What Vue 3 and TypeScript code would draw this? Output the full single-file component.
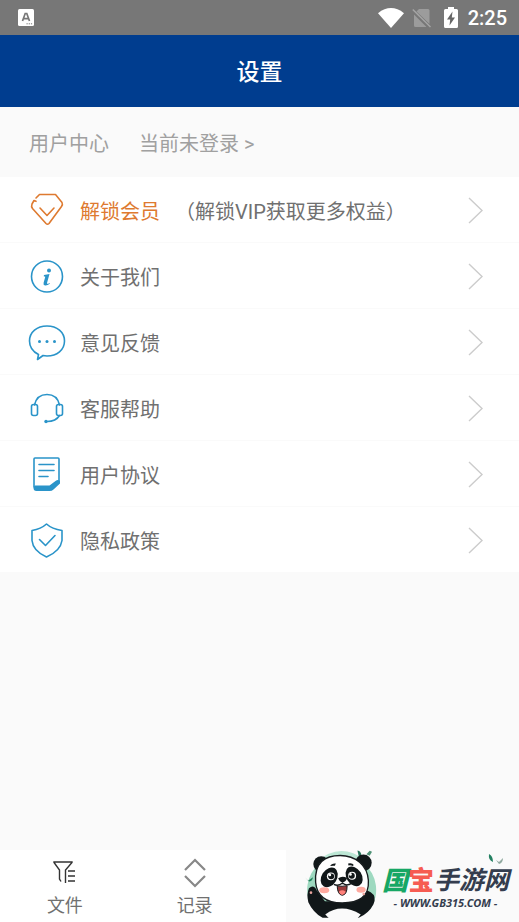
<script setup lang="ts">
interface MenuItem {
  id: string
  label: string
  note?: string
}

const items: MenuItem[] = [
  { id: 'vip', label: '解锁会员', note: '（解锁VIP获取更多权益）' },
  { id: 'about', label: '关于我们' },
  { id: 'feedback', label: '意见反馈' },
  { id: 'support', label: '客服帮助' },
  { id: 'terms', label: '用户协议' },
  { id: 'privacy', label: '隐私政策' },
]
</script>

<template>
  <div class="page">
    <div class="status">
      <svg class="status-app" viewBox="0 0 16 17" aria-hidden="true">
        <rect width="16" height="17" rx="1.5" fill="#fff" />
        <path d="M4.5 12 7.2 4.5h1.6L11.5 12M5.5 9.6h5" fill="none" stroke="#777" stroke-width="1.7" />
        <path d="M8.5 14.8h1.2m1 0h1.2m1 0h1.2" stroke="#777" stroke-width="1" />
      </svg>
      <div class="status-right">
        <svg class="wifi" viewBox="0 0 26 20" aria-hidden="true">
          <path d="M0 5.2Q13-5 26 5.2L13 20Z" fill="#fff" />
        </svg>
        <svg class="sim" viewBox="0 0 20 20" aria-hidden="true">
          <path d="M7 1h9q1.500 0 1.500 1.500V16L4.500 3.500ZM2 6.500 14.500 19H3.500Q2 19 2 17.500Z" fill="#9c9c9c" />
          <path d="M.8 1.500 18.500 19" stroke="#a5a5a5" stroke-width="1.500" />
        </svg>
        <svg class="battery" viewBox="0 0 14 21" aria-hidden="true">
          <path d="M4 0h6v2h2.500Q14 2 14 3.500v16q0 1.500-1.500 1.500h-11Q0 21 0 19.500v-16Q0 2 1.500 2H4Z" fill="#fff" />
          <path d="M8.500 4.500 3 12.500h3.200L5.500 18.500 11 10.500H7.800Z" fill="#666" />
        </svg>
        <span class="clock">2:25</span>
      </div>
    </div>

    <header class="header"><h1>设置</h1></header>

    <a class="account" href="#login">
      <span>用户中心</span>
      <span>当前未登录 &gt;</span>
    </a>

    <main class="menu">
      <a v-for="item in items" :key="item.id" class="row" :class="item.id" :href="'#' + item.id">
        <svg class="icon" viewBox="0 0 38 38" aria-hidden="true">
          <g v-if="item.id === 'vip'">
            <path d="M8 6 11.500 2.500h16L34 10.500q1 2-.5 4L21 31.500q-1.500 1.500-3 0L4.500 16.500Q3 14.500 4 12l2-3.500 2 .8" />
            <path d="m12 16 7 7.500 7-7.500" />
          </g>
          <g v-else-if="item.id === 'about'">
            <circle cx="19" cy="18.500" r="15.500" />
            <circle class="solid" cx="21" cy="12.500" r="2" />
            <path class="solid" d="m16 17 5.500-1-2.500 9q-.3 1.700 2.500 0l.3.800q-2.500 2-4.800 1.700-2-.3-1.400-2.800l1.700-6-1.600-.5Z" />
          </g>
          <g v-else-if="item.id === 'feedback'">
            <path d="M10.500 30.500Q1.500 26 1.500 17C1.500 8 9 2 19 2s17.500 6 17.500 15S29 32 19 32q-2-.1-4-.5l-5.500 4Z" />
            <g class="solid"><circle cx="11.500" cy="17.500" r="1.500" /><circle cx="19" cy="17.500" r="1.500" /><circle cx="26.500" cy="17.500" r="1.500" /></g>
          </g>
          <g v-else-if="item.id === 'support'">
            <path d="M6.500 15C8 8 13 4.500 19 4.500S30 8 31.500 15" />
            <rect x="3.500" y="14.500" width="6" height="11" rx="2" />
            <rect x="28.500" y="14.500" width="6" height="11" rx="2" />
            <path d="M31.500 25.500Q28 31.500 19 31.500" />
            <circle class="solid" cx="18" cy="31.500" r="1.700" />
          </g>
          <g v-else-if="item.id === 'terms'">
            <path d="M6 31V3q0-1 1-1h23q1 0 1 1v23" />
            <path d="M11 8.500h15M11 14.500h15M11 20.500h9" />
            <path class="solid" d="M7 29.500h14.500l6-4.500q2.500-2 4.500 0v2.500l-6.500 6q-1.500 1.500-4 1.500H8.500q-3 0-3-3 0-2 1.500-2.500Z" />
          </g>
          <g v-else>
            <path d="M18.500 2q5.500 5 15.500 6.500v10Q32.500 29 18.500 35 5 29 4 18.500v-10Q13 7 18.500 2Z" />
            <path d="m11.500 17.500 6 6 9.500-10" />
          </g>
        </svg>
        <span class="label">{{ item.label }}</span>
        <span v-if="item.note" class="note">{{ item.note }}</span>
        <svg class="chevron" viewBox="0 0 15 27" aria-hidden="true"><path d="m1 1 13 12.500L1 26" /></svg>
      </a>
    </main>

    <footer class="bottom">
      <a class="tab" href="#files">
        <svg class="tab-icon files" viewBox="0 0 30 30" aria-hidden="true">
          <path d="M11 23.500 9.500 21V12L4 4.500V4h18v.5L15.500 12v13" />
          <path d="M18 13h7M18 18h7M18 23h7" />
        </svg>
        <span>文件</span>
      </a>
      <a class="tab" href="#records">
        <svg class="tab-icon records" viewBox="0 0 30 30" aria-hidden="true">
          <path d="m5 12 10-10 10 10M5 18l10 10 10-10" />
        </svg>
        <span>记录</span>
      </a>
      <div class="brand">
        <svg class="panda" viewBox="45 30 220 204" aria-hidden="true">
          <path d="M68 206A104 104 0 1 1 243 206Z" fill="#9ed9c0" />
          <path d="M85 70Q150 10 224 66" fill="none" stroke="#bce7d5" stroke-width="12" />
          <path d="m42 108 12 14 15-10q-2 14-13 12Z" fill="#23845e" />
          <path d="M203 31q11 2 12 15l-8 2Z" fill="#26745a" />
          <path d="m240 32 7 3-7 12-10-5Z" fill="#4e9175" />
          <g fill="#111719">
            <circle cx="94" cy="72" r="24" /><circle cx="221" cy="68" r="25" />
            <path d="M57 145q14-14 24 7l24 32h94l12-27q14-13 32 0 19 12 8 37-14 27-44 40H98q-28-15-43-47-6-24 2-42Z" />
          </g>
          <path d="M106 224q48-36 107 0l-10 12h-85Z" fill="#fafafa" />
          <path d="M77 127C73 68 105 46 151 46s82 29 85 75c3 50-29 68-79 68-49 0-76-19-80-62Z" fill="#fff" stroke="#171c1e" stroke-width="4" />
          <g fill="#111719">
            <ellipse cx="118" cy="112" rx="23" ry="32" transform="rotate(32 118 112)" />
            <ellipse cx="193" cy="109" rx="23" ry="32" transform="rotate(-32 193 109)" />
            <path d="M145 115q12-9 27-1-5 13-14 13-8 0-13-12Z" />
            <path d="M121 78q3-9 17-8l-3 7q-7-1-14 1Zm54-8q13-3 17 5l-3 3q-6-4-13-2Z" />
          </g>
          <g fill="#fff"><circle cx="123" cy="109" r="12" /><circle cx="187" cy="107" r="12" /></g>
          <g fill="#111719"><circle cx="124" cy="109" r="9" /><circle cx="186" cy="107" r="9" /></g>
          <g fill="#fff"><circle cx="120" cy="105" r="4" /><circle cx="182" cy="103" r="4" /></g>
          <g fill="#ffaaa0"><ellipse cx="103" cy="151" rx="15" ry="9" /><ellipse cx="214" cy="149" rx="14" ry="9" /></g>
          <path d="M132 133q13 7 26-4 12 11 27 1M158 127v6" fill="none" stroke="#171c1e" stroke-width="4" />
          <path d="M142 138q15 2 30-1 0 28-15 29-14-2-15-28Z" fill="#983a3b" stroke="#171c1e" stroke-width="3" />
          <path d="M147 155q10-9 21 0-5 10-11 10t-10-10Z" fill="#ff827b" />
          <g fill="#e9a49d"><circle cx="63" cy="158" r="4" /><circle cx="222" cy="162" r="4" /></g>
        </svg>
        <div class="brand-text">
          <div class="brand-name">
            <span class="green">国</span><span class="red">宝</span><span>手游网</span>
            <svg class="leaf" viewBox="0 0 16 12" aria-hidden="true">
              <path d="M1 0q4 2 4 8Q0 6 1 0Z" fill="#238061" />
              <path d="m8 6 3 2 4-4q0 5-4 6Z" fill="#91aaa0" />
            </svg>
          </div>
          <div class="brand-url">- WWW.GB315.COM -</div>
        </div>
      </div>
    </footer>
  </div>
</template>

<style>
body {
  margin: 0;
  background: #fafafa;
}
</style>

<style scoped>
.page {
  display: flex;
  flex-direction: column;
  min-height: 100vh;
  background: #fafafa;
  color: #707070;
  font-family: Roboto, "Noto Sans CJK SC", sans-serif;
  font-size: 20px;
  font-weight: 400;
}
.page * {
  box-sizing: border-box;
}
a {
  color: inherit;
  text-decoration: none;
}
svg {
  display: block;
  flex: none;
}
.status {
  display: flex;
  align-items: center;
  justify-content: space-between;
  height: 35px;
  padding: 0 12px 0 18px;
  background: #777;
}
.status-app {
  width: 16px;
  height: 17px;
}
.status-right {
  display: flex;
  align-items: center;
}
.wifi {
  width: 26px;
  height: 20px;
  margin-right: 8px;
}
.sim {
  width: 20px;
  height: 20px;
  margin-right: 12px;
}
.battery {
  width: 14px;
  height: 21px;
  margin-right: 10px;
}
.clock {
  color: #fff;
  font-size: 20px;
  font-weight: 500;
}
.header {
  display: flex;
  align-items: center;
  justify-content: center;
  height: 72px;
  padding-bottom: 2px;
  background: #003d8f;
}
h1 {
  margin: 0;
  color: #fff;
  font-size: 23px;
  font-weight: 500;
}
.account {
  display: flex;
  align-items: center;
  gap: 30px;
  height: 70px;
  padding: 0 29px;
  color: #a0a0a0;
}
.menu {
  background: #fff;
}
.row {
  display: flex;
  align-items: center;
  height: 66px;
  padding: 2px 36px 0 28px;
  border-bottom: 1px solid #fafafa;
}
.icon {
  width: 38px;
  height: 38px;
  margin-right: 14px;
  fill: none;
  stroke: #2a94c9;
  stroke-width: 1.6;
  stroke-linejoin: round;
  stroke-linecap: round;
}
.solid {
  fill: #2a94c9;
  stroke: none;
}
.vip .icon {
  stroke: #de7a30;
}
.vip .label {
  color: #de7a30;
}
.note {
  margin-left: 15px;
}
.chevron {
  width: 15px;
  height: 27px;
  margin-left: auto;
  fill: none;
  stroke: #ccc;
  stroke-width: 1.4;
}
.bottom {
  display: grid;
  grid-template-columns: 1fr 1fr 2fr;
  height: 72px;
  margin-top: auto;
  background: #fff;
}
.tab {
  display: flex;
  flex-direction: column;
  align-items: center;
  padding-top: 8px;
  font-size: 18px;
  line-height: 36px;
}
.tab-icon {
  width: 30px;
  height: 30px;
  fill: none;
}
.files {
  stroke: #333;
  stroke-width: 1.4;
}
.records {
  stroke: #888;
  stroke-width: 2.2;
}
.brand {
  display: flex;
  justify-self: end;
  width: 233px;
  padding-left: 19px;
  background: #fafafa;
}
.panda {
  width: 73px;
  height: 68px;
}
.brand-text {
  padding: 10px 0 0 4px;
  color: #343d4e;
  font-style: italic;
}
.brand-name {
  position: relative;
  display: flex;
  align-items: center;
  height: 36px;
  font-size: 25px;
  font-weight: 700;
}
.green,
.red {
  font-size: 26px;
  font-weight: 900;
}
.green {
  color: #16a765;
}
.red {
  color: #f65c52;
  font-style: normal;
}
.leaf {
  position: absolute;
  top: -6px;
  right: 5px;
  width: 16px;
  height: 12px;
}
.brand-url {
  font-family: "Noto Sans", sans-serif;
  font-size: 11px;
  font-weight: 700;
  line-height: 14px;
  text-align: center;
  white-space: nowrap;
}
</style>
